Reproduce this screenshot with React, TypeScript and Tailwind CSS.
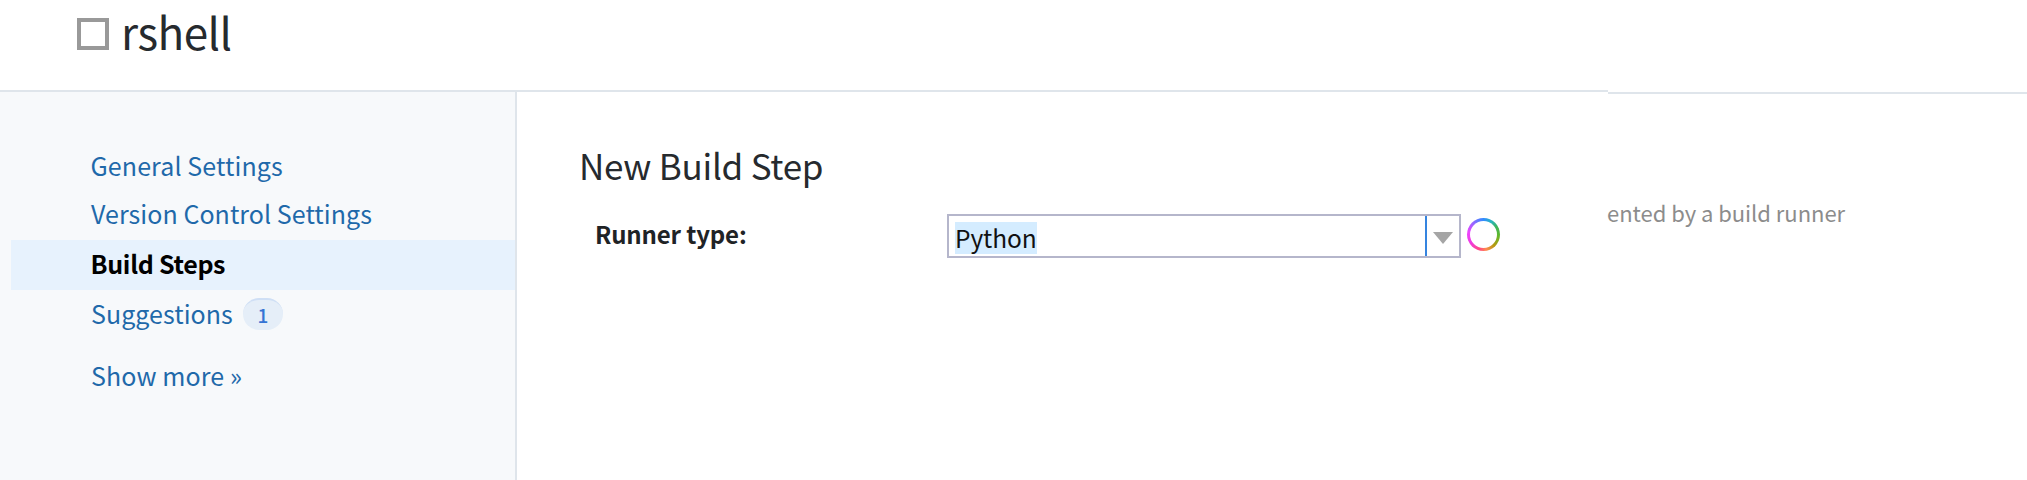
function Header() {
  return (
    <header className="flex h-[94px] w-full items-start">
      <div className="flex h-[92px] w-[1608px] items-start border-b-2 border-[#dfe5eb] pl-[77px]">
        <span className="mt-[18px] size-8 border-4 border-[#999999]" />
        <h1 className="ml-[12px] mt-[1px] text-[44px] leading-[60px] font-normal tracking-[-0.5px] text-[#262a2e]">rshell</h1>
      </div>
      <div className="h-[94px] flex-1 border-b-2 border-[#dfe5eb]" />
    </header>
  );
}

function Sidebar() {
  return (
    <aside className="-mt-0.5 flex h-[388px] w-[517px] shrink-0 flex-col border-r-2 border-[#dfe5eb] bg-[#f7f9fb] pt-[50px] text-[25px] leading-[46px] text-[#1f69aa]">
      <a className="h-12 pl-[90.5px] tracking-[0.1px]">General Settings</a>
      <a className="h-[50px] pl-[91px] tracking-[0.05px]">Version Control Settings</a>
      <a className="ml-[11px] h-[50px] bg-[#e7f2fd] pl-[79.5px] font-bold tracking-[-0.3px] text-black">Build Steps</a>
      <a className="flex h-[62px] items-start pl-[91px]">
        <span className="w-[152px] tracking-[0.05px]">Suggestions</span>
        <span className="mt-2 h-8 w-10 rounded-2xl border-t-2 border-[#cfdff5] bg-[#e5eef8] text-center text-[19px] leading-[30px] font-medium text-[#3574d4]">1</span>
      </a>
      <a className="h-12 pl-[91px] tracking-[0.1px]">Show more »</a>
    </aside>
  );
}

function RunnerSelect() {
  return (
    <div className="flex h-11 w-[514px] border-2 border-[#b5b6cb] bg-white">
      <div className="flex-1 pl-[6px] pt-[6px]">
        <span className="block h-8 w-[82px] bg-[#d4ecff] text-[24.5px] leading-[31px] tracking-[-0.1px] text-[#111]">Python</span>
      </div>
      <div className="flex w-[34px] border-l-2 border-[#3584df]">
        <svg className="ml-[6px] mt-4 h-[12px] w-5" viewBox="0 0 20 12">
          <path d="M0 0H20L10 12Z" fill="#a5a5a5" />
        </svg>
      </div>
    </div>
  );
}

function Spinner() {
  return (
    <span className="ml-[5.5px] mt-[3.5px] size-[33px] rounded-full bg-[conic-gradient(#308cff,#28b5c0_30deg,#3cb45b_60deg,#62b82a_95deg,#b39a10_135deg,#ff8a50_170deg,#ff4a80_195deg,#f03ae0_235deg,#ec45ff_280deg,#9068ff_320deg,#308cff)] p-[3px]">
      <span className="block size-full rounded-full bg-white" />
    </span>
  );
}

export default function App() {
  return (
    <div className="h-[480px] w-[2027px] overflow-hidden bg-white font-['Noto_Sans_CJK_SC',sans-serif]">
      <Header />
      <div className="flex">
        <Sidebar />
        <main className="flex w-[1091px] flex-col">
          <h2 className="mt-[47px] pl-[62px] text-[35px] leading-[48px] font-normal tracking-[-0.25px] text-[#262a2e]">New Build Step</h2>
          <div className="mt-[25px] flex items-start">
            <span className="w-[430px] pl-[78px] text-[24px] leading-10 font-bold tracking-[-0.15px] text-[#1f2326]">Runner type:</span>
            <RunnerSelect />
            <Spinner />
          </div>
        </main>
        <p className="-ml-px mt-[102px] text-[22px] leading-8 tracking-[-0.03px] text-[#8c8c8c]">ented by a build runner</p>
      </div>
    </div>
  );
}
